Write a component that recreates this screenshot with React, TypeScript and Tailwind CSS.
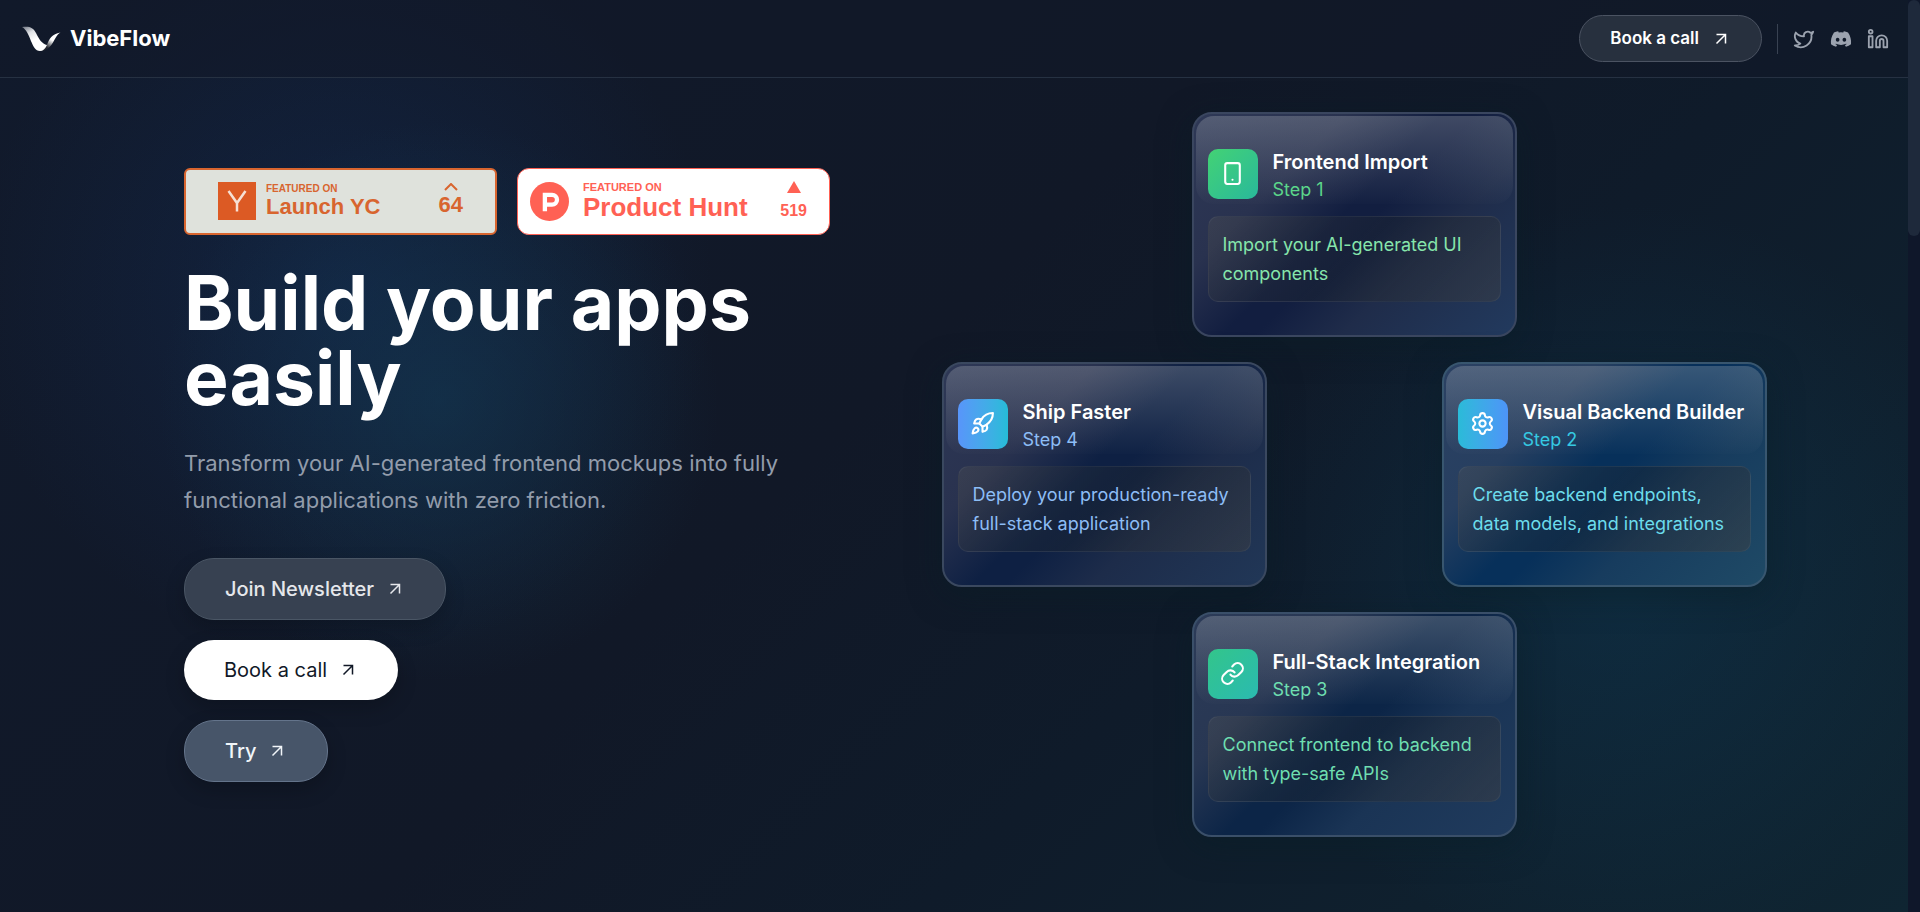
import clsx from 'clsx'
import type { ReactNode } from 'react'
import { Linkedin, Rocket, Settings, Twitter } from 'lucide-react'
import { FaDiscord } from 'react-icons/fa'
import { FiLink, FiSmartphone } from 'react-icons/fi'

function Arrow() {
  return (
    <svg viewBox="0 0 12 12" fill="none" stroke="currentColor" strokeWidth="1.5" className="w-3 h-3">
      <path d="M1.5 1.5h9v9M10.5 1.5l-9 9" />
    </svg>
  )
}

function Logo() {
  return (
    <svg viewBox="0 0 39 26" className="w-[39px] h-[26px]">
      <defs>
        <linearGradient id="wing-left" x1="0" y1="0" x2="0.4" y2="0.8">
          <stop offset="0" stopColor="#6d7380" />
          <stop offset="0.4" stopColor="#dfe1e5" />
          <stop offset="0.8" stopColor="#ffffff" />
        </linearGradient>
        <linearGradient id="wing-right" x1="0.3" y1="0.9" x2="0.8" y2="0.1">
          <stop offset="0.1" stopColor="#23262e" />
          <stop offset="0.6" stopColor="#ffffff" />
        </linearGradient>
      </defs>
      <path d="M25 19c2-6 5-11 13.500-12.500-4.500 2.500-5.500 7.500-8.500 11.500-3 4-6 7-12 7 3-1 5-3 7-6z" fill="url(#wing-right)" />
      <path d="M0 1c7-1 11 0 14 6 3 6 6 11 11 12-2 4-4 6-7 6C9 25 9 6 0 1z" fill="url(#wing-left)" />
    </svg>
  )
}

const frontendImport = {
  title: 'Frontend Import',
  step: 'Step 1',
  text: 'Import your AI-generated UI components',
  icon: <FiSmartphone className="w-[25px] h-[25px]" />,
  tile: 'bg-linear-to-br from-[#43d273] to-[#29b99a]',
  label: 'text-[#5bd68a]',
  body: 'text-[#86e5ab]',
  surface:
    'border-[#3a465f] bg-[linear-gradient(135deg,#2e3856_0%,#29324f_28%,#121e40_46%,#121e40_52%,#1f2c4a_68%,#223a5e_100%)]',
}

const visualBackend = {
  title: 'Visual Backend Builder',
  step: 'Step 2',
  text: 'Create backend endpoints, data models, and integrations',
  icon: <Settings className="w-[25px] h-[25px]" />,
  tile: 'bg-linear-to-r from-[#2abbd8] to-[#4d94f8]',
  label: 'text-[#35c9e2]',
  body: 'text-[#6cdcec]',
  surface:
    'border-[#38566f] bg-[linear-gradient(135deg,#2b4163_0%,#273f60_28%,#07305a_46%,#07305a_52%,#173c5e_68%,#1f4a66_100%)]',
}

const fullStack = {
  title: 'Full-Stack Integration',
  step: 'Step 3',
  text: 'Connect frontend to backend with type-safe APIs',
  icon: <FiLink className="w-[25px] h-[25px]" />,
  tile: 'bg-linear-to-br from-[#33c58a] to-[#2bbab0]',
  label: 'text-[#6edeb0]',
  body: 'text-[#6edeb0]',
  surface:
    'border-[#3a4f69] bg-[linear-gradient(135deg,#2c3b58_0%,#283753_28%,#0c2547_46%,#0c2547_52%,#1a3455_68%,#203b5d_100%)]',
}

const shipFaster = {
  title: 'Ship Faster',
  step: 'Step 4',
  text: 'Deploy your production-ready full-stack application',
  icon: <Rocket className="w-[25px] h-[25px]" />,
  tile: 'bg-linear-to-r from-[#5895fa] to-[#25bcd8]',
  label: 'text-[#8dbdf6]',
  body: 'text-[#8dbdf6]',
  surface:
    'border-[#3a485f] bg-[linear-gradient(135deg,#2e3856_0%,#29324f_28%,#0e2043_46%,#0e2043_52%,#1d2c4a_68%,#213757_100%)]',
}

function StepCard({ item }: { item: typeof frontendImport }) {
  return (
    <article
      className={clsx(
        'relative flex flex-col justify-center gap-[14px] w-[325px] h-[225px] shrink-0 px-[14px] pb-[2px] rounded-[20px] border-2 shadow-[0_8px_32px_rgba(8,30,38,0.5)]',
        item.surface,
      )}
    >
      {/* Glass highlight */}
      <div className="absolute inset-x-[2px] top-[2px] h-[88px] rounded-[18px] bg-linear-to-b from-[#c8cdd0]/25 to-[#c8cdd0]/1" />

      <header className="relative flex items-center gap-[15px]">
        <div className={clsx('flex items-center justify-center w-[50px] h-[50px] rounded-[10px] text-white', item.tile)}>
          {item.icon}
        </div>
        <div>
          <h3 className="text-xl leading-8 font-semibold text-white whitespace-nowrap">{item.title}</h3>
          <p className={clsx('text-lg leading-6', item.label)}>{item.step}</p>
        </div>
      </header>

      <p
        className={clsx(
          'relative px-[14px] py-[13px] rounded-[10px] border border-white/5 bg-linear-135 from-[#5a5a58]/30 via-[#1a222c]/40 to-[#3c3e42]/50 text-lg leading-[29px]',
          item.body,
        )}
      >
        {item.text}
      </p>
    </article>
  )
}

function PillButton({ children, className }: { children: ReactNode; className: string }) {
  return (
    <button
      type="button"
      className={clsx(
        'flex items-center gap-[15px] pl-10 pr-11 rounded-[30px] text-xl shadow-[0_8px_20px_rgba(0,0,0,0.2)]',
        className,
      )}
    >
      {children}
      <Arrow />
    </button>
  )
}

export default function App() {
  return (
    <div className="flex min-h-screen bg-[#0f172a] font-['Inter',sans-serif]">
      <div className="flex-1 min-w-0 bg-[radial-gradient(circle_at_23%_44%,rgba(20,62,88,0.5),transparent_18%),radial-gradient(circle_at_18%_32%,rgba(20,50,98,0.4),transparent_22%),radial-gradient(circle_at_85%_64%,rgba(14,62,90,0.4),transparent_22%),linear-gradient(135deg,#111a2c_0%,#111827_45%,#0f1b2a_65%,#0f2532_100%)]">
        <header className="flex items-center justify-between h-[78px] pl-[22px] pr-[19px] border-b border-[#263142] bg-[#111827]/50">
          <a href="#" className="flex items-center gap-[9px] text-[22px] font-bold text-white">
            <Logo />
            VibeFlow
          </a>
          <div className="flex items-center">
            <button
              type="button"
              className="flex items-center gap-4 h-[47px] pl-[30px] pr-[34px] rounded-full border border-[#4b5362] bg-[#27303e] text-[17px] font-semibold text-white"
            >
              Book a call
              <Arrow />
            </button>
            <div className="w-px h-[30px] mx-[15px] bg-[#394252]" />
            <nav className="flex items-center gap-[15px] text-[#9ca3af]">
              <a href="#" aria-label="Twitter"><Twitter className="w-[22px] h-[22px]" /></a>
              <a href="#" aria-label="Discord"><FaDiscord className="w-[22px] h-[22px]" /></a>
              <a href="#" aria-label="LinkedIn"><Linkedin className="w-[22px] h-[22px]" /></a>
            </nav>
          </div>
        </header>

        <main className="grid grid-cols-2 items-center gap-[60px] max-w-[1540px] mx-auto pt-[34px] pb-10">
          <section>
            <div className="flex gap-5 font-['Liberation_Sans',sans-serif] font-bold">
              <a
                href="#"
                className="flex items-center w-[313px] h-[67px] px-8 rounded-md border-2 border-[#d8652f] bg-[#dfe2dc] text-[#d8652f]"
              >
                <span className="flex items-center justify-center w-[38px] h-[38px] bg-[#dc5a24] text-[#f6e0d4]">
                  <svg viewBox="0 0 20 22" fill="none" stroke="currentColor" strokeWidth="2.5" className="w-5 h-[22px]">
                    <path d="M1.500 1l8.500 12 8.500-12M10 12v9.500" />
                  </svg>
                </span>
                <span className="flex-1 ml-[10px]">
                  <span className="block text-[10px] leading-3">FEATURED ON</span>
                  <span className="block text-[22px] leading-6">Launch YC</span>
                </span>
                <span className="flex flex-col items-center">
                  <svg viewBox="0 0 14 8" fill="none" stroke="currentColor" strokeWidth="2" className="w-[14px] h-2">
                    <path d="M1 7l6-6 6 6" />
                  </svg>
                  <span className="text-[22px] leading-7">64</span>
                </span>
              </a>
              <a
                href="#"
                className="flex items-center w-[313px] h-[67px] pl-3 pr-[22px] rounded-[12px] border border-[#ff6154] bg-white text-[#ff6154]"
              >
                <svg viewBox="0 0 38 38" className="w-[39px] h-[39px]">
                  <circle cx="19" cy="19" r="19" fill="#ff6154" />
                  <path d="M14.500 28.500V12.500h7a4.800 4.800 0 0 1 0 9.600h-7" fill="none" stroke="#fff" strokeWidth="4.200" />
                </svg>
                <span className="flex-1 ml-[14px]">
                  <span className="block text-[11px] leading-3">FEATURED ON</span>
                  <span className="block text-[26px] leading-7">Product Hunt</span>
                </span>
                <span className="flex flex-col items-center gap-2">
                  <svg viewBox="0 0 14 12" className="w-[14px] h-3">
                    <path d="M7 0l7 12H0z" fill="currentColor" />
                  </svg>
                  <span className="text-base leading-5">519</span>
                </span>
              </a>
            </div>

            <h1 className="mt-[30px] text-[75px] leading-[75px] font-bold text-white">Build your apps easily</h1>
            <p className="max-w-[640px] mt-[30px] text-[22px] leading-[37px] text-[#929cab]">
              Transform your AI-generated frontend mockups into fully functional applications with zero friction.
            </p>

            <div className="flex flex-col items-start gap-5 mt-[39px]">
              <PillButton className="h-[62px] border border-[#4a5665] bg-[#374151] font-medium text-[#e5e7eb]">
                Join Newsletter
              </PillButton>
              <PillButton className="h-[60px] bg-white text-[#111827]">Book a call</PillButton>
              <PillButton className="h-[62px] border border-[#64748b] bg-[#475569] font-medium text-[#f1f5f9]">
                Try
              </PillButton>
            </div>
          </section>

          <section className="flex justify-center">
            <div className="flex flex-col items-center gap-[25px] w-[825px] shrink-0">
              <StepCard item={frontendImport} />
              <div className="flex justify-between self-stretch">
                <StepCard item={shipFaster} />
                <StepCard item={visualBackend} />
              </div>
              <StepCard item={fullStack} />
            </div>
          </section>
        </main>
      </div>

      {/* Scroll track */}
      <div className="w-3 shrink-0">
        <div className="h-[236px] rounded-full bg-[#1e293b]" />
      </div>
    </div>
  )
}
